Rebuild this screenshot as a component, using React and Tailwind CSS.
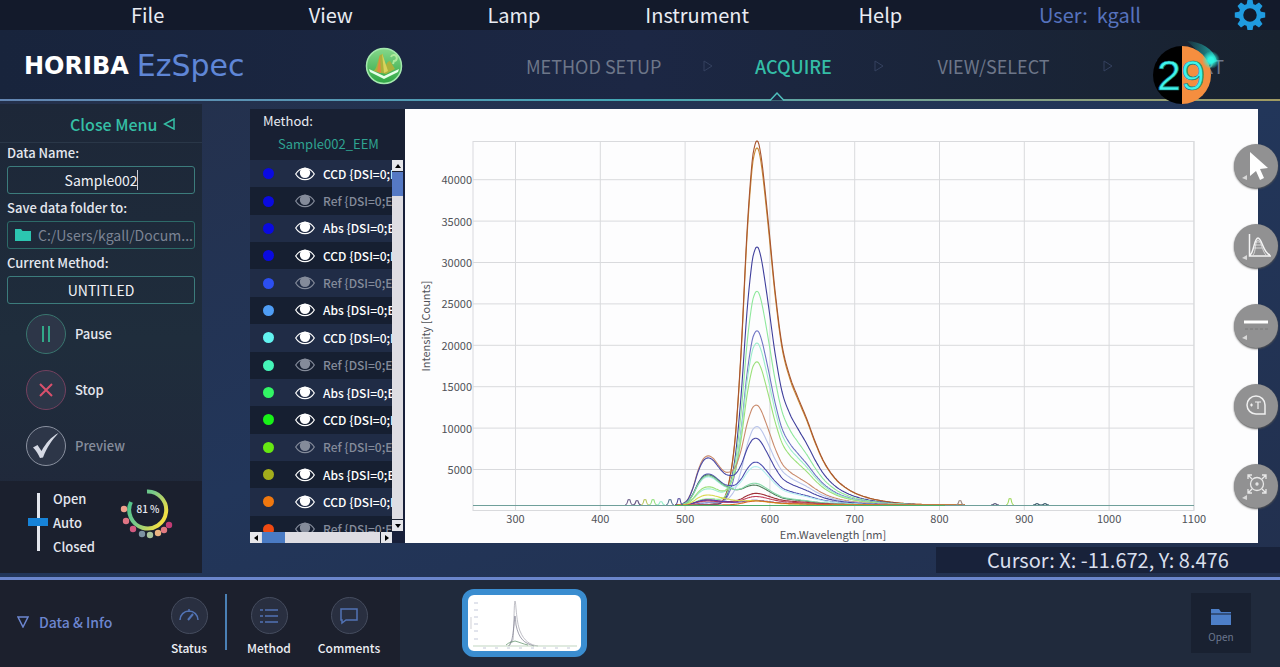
import { useState } from 'react';
import clsx from 'clsx';

const MENU_ITEMS = ['File', 'View', 'Lamp', 'Instrument', 'Help'];

const SERIES = [
    { type: 'CCD', color: '#0a0ae0', visible: true },
    { type: 'Ref', color: '#0a0ae0', visible: false },
    { type: 'Abs', color: '#0a0ae0', visible: true },
    { type: 'CCD', color: '#0a0ae0', visible: true },
    { type: 'Ref', color: '#2c4ff0', visible: false },
    { type: 'Abs', color: '#4f9df5', visible: true },
    { type: 'CCD', color: '#62f3f0', visible: true },
    { type: 'Ref', color: '#45f5b8', visible: false },
    { type: 'Abs', color: '#32f565', visible: true },
    { type: 'CCD', color: '#18f218', visible: true },
    { type: 'Ref', color: '#66e812', visible: false },
    { type: 'Abs', color: '#a3ad1c', visible: true },
    { type: 'CCD', color: '#f0780f', visible: true },
    { type: 'Ref', color: '#f04a12', visible: false },
];

// [offset from peak, relative height]
const MAIN_PEAK = [
    [-60, 0], [-45, 0.002], [-35, 0.01], [-29, 0.05], [-22, 0.18], [-16, 0.42], [-10, 0.75], [-5, 0.94], [-2, 0.99], [0, 1],
    [2, 0.99], [5, 0.94], [9, 0.84], [13, 0.73], [18, 0.59], [25, 0.44], [33, 0.352], [41, 0.295], [50, 0.235], [58, 0.175], [66, 0.124],
    [74, 0.088], [83, 0.06], [98, 0.033], [120, 0.014], [153, 0.003], [200, 0],
];
const SIDE_PEAK = [
    [-30, 0], [-25, 0.03], [-20, 0.12], [-15, 0.36], [-10, 0.7], [-5, 0.93], [0, 1], [5, 0.95], [10, 0.82], [15, 0.68],
    [21, 0.55], [30, 0.36], [40, 0.2], [55, 0.08], [75, 0],
];

// [colour, main peak height, side peak height]
const CURVES = [
    ['#c98a35', 357, 0],
    ['#a8552f', 364, 0],
    ['#3f3f9c', 258, 0],
    ['#8fe89c', 213, 6],
    ['#6f74c4', 174, 2],
    ['#9ceecb', 160, 16],
    ['#9be07a', 141, 18],
    ['#c98a6c', 94, 49],
    ['#b9c4ea', 78, 4],
    ['#4747a5', 61, 47],
    ['#4c4fb0', 39, 31],
    ['#b4f0f0', 35, 28],
    ['#4f7f5c', 16, 30],
    ['#86d8a8', 18, 29],
    ['#a03038', 11, 5],
    ['#c0405a', 8, 4],
    ['#5a3bb0', 4, 5],
    ['#d8d84a', 3, 10],
    ['#d86a20', 4, 0],
];

const BUMPS = [
    [224, 5, '#6a5a86'], [232, 4, '#6a5a86'], [240, 5, '#b5c45a'], [248, 5, '#8fe07a'], [256, 3, '#9ceecb'], [265, 5, '#4f6f8c'],
    [274, 6, '#54489a'], [555, 4, '#a08c84'], [605, 6, '#9ed85a'], [590, 1, '#555577'], [632, 1, '#335566'], [640, 1, '#335566'],
];

const sample = (profile, x) => {
    if (x <= profile[0][0] || x >= profile[profile.length - 1][0]) return 0;
    const i = profile.findIndex(([px]) => px > x);
    const p = (n) => profile[Math.max(0, Math.min(profile.length - 1, n))];
    const [x1, y1] = p(i - 1);
    const [x2, y2] = p(i);
    const m1 = (y2 - p(i - 2)[1]) / (x2 - p(i - 2)[0]);
    const m2 = (p(i + 1)[1] - y1) / (p(i + 1)[0] - x1);
    const h = x2 - x1;
    const t = (x - x1) / h;
    return (
        (2 * t ** 3 - 3 * t ** 2 + 1) * y1 +
        (t ** 3 - 2 * t ** 2 + t) * h * m1 +
        (-2 * t ** 3 + 3 * t ** 2) * y2 +
        (t ** 3 - t ** 2) * h * m2
    );
};

const BASELINE = 396;

const curvePath = (main, side) => {
    const points = [];
    for (let x = 270; x <= 560; x += 1) {
        const y = BASELINE - main * sample(MAIN_PEAK, x - 352) - side * sample(SIDE_PEAK, x - 303);
        points.push(`${x},${y.toFixed(1)}`);
    }
    return `M${points.join('L')}`;
};

const Curves = () => (
    <g fill="none" strokeWidth="1.1">
        {CURVES.map(([color, main, side]) => (
            <path key={`${color}${main}`} d={curvePath(main, side)} stroke={color} />
        ))}
        {BUMPS.map(([x, h, color]) => (
            <path key={x} d={`M${x - 4} 396Q${x - 2} 396 ${x - 1} ${396 - h}Q${x} ${395 - h} ${x + 1} ${396 - h}Q${x + 2} 396 ${x + 4} 396`} stroke={color} />
        ))}
        <path d="M68 396.5H789" stroke="#6f9f9a" />
        <path d="M270 396.5H540" stroke="#4cae6c" />
    </g>
);

const X_TICKS = [300, 400, 500, 600, 700, 800, 900, 1000, 1100];
const Y_TICKS = [5000, 10000, 15000, 20000, 25000, 30000, 35000, 40000];

const Chart = () => (
    <svg viewBox="0 0 853 434" className="h-full w-full" role="img" aria-label="Emission spectra">
        <g stroke="#d9dadd">
            {X_TICKS.map((t, i) => (
                <line key={t} x1={110.5 + i * 84.8} x2={110.5 + i * 84.8} y1="32" y2="401" />
            ))}
            {Y_TICKS.map((t, i) => (
                <line key={t} x1="68" x2="789" y1={360.5 - i * 41.4} y2={360.5 - i * 41.4} />
            ))}
            <rect x="68" y="32.5" width="721" height="369" fill="none" />
        </g>
        <Curves />
        <g fill="#505258" fontSize="11">
            {X_TICKS.map((t, i) => (
                <text key={t} x={110.5 + i * 84.8} y="414" textAnchor="middle">{t}</text>
            ))}
            {Y_TICKS.map((t, i) => (
                <text key={t} x="67" y={365 - i * 41.4} textAnchor="end">{t}</text>
            ))}
            <text x="428" y="430" textAnchor="middle">Em.Wavelength [nm]</text>
            <text transform="translate(25 217) rotate(-90)" textAnchor="middle">Intensity [Counts]</text>
        </g>
    </svg>
);

const Eye = () => (
    <svg viewBox="0 0 20 14" className="h-[14px] w-5">
        <path d="M.7 7C3 3 6 1.300 10 1.300S17 3 19.300 7C17 11 14 12.700 10 12.700S3 11 .7 7Z" fill="none" stroke="currentColor" strokeWidth="1.200" />
        <circle cx="10" cy="5.800" r="5.200" fill="currentColor" />
    </svg>
);

const SeriesList = () => {
    const [series, setSeries] = useState(SERIES);

    const toggle = (index) =>
        setSeries(series.map((s, i) => (i === index ? { ...s, visible: !s.visible } : s)));

    return (
        <ul className="grid h-[383px] auto-rows-fr">
            {series.map(({ type, color, visible }, i) => (
                <li
                    key={i}
                    className={clsx(
                        'flex items-center whitespace-nowrap pl-[13px] text-xs font-medium',
                        i % 2 ? 'bg-[#161f31]' : 'bg-[#202c46]',
                        visible ? 'text-white' : 'text-[#848b9a]'
                    )}
                >
                    <span className="size-[11px] shrink-0 rounded-full" style={{ backgroundColor: color }} />
                    <button type="button" aria-label={`Toggle ${type}`} onClick={() => toggle(i)} className="ml-[21px] shrink-0">
                        <Eye />
                    </button>
                    <span className="ml-2">{type} {'{'}DSI=0;E</span>
                </li>
            ))}
        </ul>
    );
};

const ScrollButton = ({ label, children }) => (
    <button type="button" aria-label={label} className="flex size-[11px] shrink-0 items-center justify-center bg-[#e6e6ea] text-black">
        <svg viewBox="0 0 8 8" className="size-2 fill-current">{children}</svg>
    </button>
);

const MethodPanel = () => (
    <section className="flex w-[155px] shrink-0 flex-col bg-[#18203a]">
        <header className="h-[51px] shrink-0 bg-[#182033] pl-[13px]">
            <h2 className="text-[13px] leading-[23px] text-[#e8ebf2]">Method:</h2>
            <p className="pl-[15px] text-[13px] leading-6 text-[#2fa391]">Sample002_EEM</p>
        </header>
        <div className="flex min-h-0 flex-1">
            <div className="flex min-w-0 flex-1 flex-col">
                <div className="min-h-0 flex-1 overflow-hidden">
                    <SeriesList />
                </div>
                <div className="flex h-[11px] bg-[#dedde3]">
                    <ScrollButton label="Scroll left"><path d="M6 1v6L2 4z" /></ScrollButton>
                    <div className="ml-px w-[23px] bg-[#4a7bc4]" />
                    <div className="flex-1" />
                    <div className="w-px bg-[#1d2433]" />
                    <ScrollButton label="Scroll right"><path d="M2 1v6l4-3z" /></ScrollButton>
                </div>
            </div>
            <div className="mr-0.5 mb-3 flex w-[11px] flex-col bg-[#dedde3]">
                <ScrollButton label="Scroll up"><path d="M1 6h6L4 2z" /></ScrollButton>
                <div className="h-px bg-[#1d2433]" />
                <div className="h-6 bg-[#5579c4]" />
                <div className="flex-1" />
                <div className="h-px bg-[#1d2433]" />
                <ScrollButton label="Scroll down"><path d="M1 2h6L4 6z" /></ScrollButton>
            </div>
        </div>
    </section>
);

const MenuBar = () => (
    <nav className="flex h-[30px] items-center bg-[#131a2b] pl-14 text-xl leading-7 text-[#e9ecf3]">
        {MENU_ITEMS.map((item) => (
            <button key={item} type="button" className="flex-1 basis-0 text-center">{item}</button>
        ))}
        <span className="w-[236px] text-center whitespace-pre text-[#5672bd]">User:  kgall</span>
        <button type="button" aria-label="Settings" className="flex w-[72px] justify-center pl-3">
            <svg viewBox="0 0 32 32" className="size-8 shrink-0">
                <g fill="#1f9be0">
                    {[0, 45, 90, 135, 180, 225, 270, 315].map((a) => (
                        <path key={a} d="M12.500 6l1-5.200h5l1 5.200z" transform={`rotate(${a} 16 16)`} />
                    ))}
                </g>
                <circle cx="16" cy="16" r="9" fill="none" stroke="#1f9be0" strokeWidth="4.500" />
            </svg>
        </button>
    </nav>
);

const StepArrow = () => (
    <svg viewBox="0 0 10 12" className="h-3 w-[10px] shrink-0" fill="none" stroke="#34415f">
        <path d="M1 1v10l8-5z" />
    </svg>
);

const Countdown = () => (
    <div className="absolute top-[16px] right-[69px] size-[58px]">
        <svg viewBox="0 0 58 58" className="size-full overflow-visible">
            <defs>
                <radialGradient id="spark">
                    <stop offset="0.300" stopColor="#2ff5e0" />
                    <stop offset="1" stopColor="#2ff5e0" stopOpacity="0" />
                </radialGradient>
                <linearGradient id="trail">
                    <stop offset="0" stopColor="#1fa7a5" stopOpacity="0.100" />
                    <stop offset="1" stopColor="#25d5cb" stopOpacity="0.800" />
                </linearGradient>
            </defs>
            <path d="M34-5C48-4 60 2 64 15L54 20C50 10 44 4 34-5Z" fill="url(#trail)" />
            <path d="M29 0a29 29 0 0 0 0 58z" fill="#000" />
            <path d="M29 0a29 29 0 0 1 0 58z" fill="#f58e3f" />
            <circle cx="58" cy="14" r="9" fill="url(#spark)" />
            <text x="28" y="44" textAnchor="middle" fontSize="43" fill="#3ff5ec" stroke="#17767a" strokeWidth="0.700" className="font-['Liberation_Sans',sans-serif]">29</text>
        </svg>
    </div>
);

const Header = () => (
    <header className="relative z-10 flex h-[71px] items-center bg-linear-to-r from-[#18243c] via-[#1c2744] to-[#18222f] pt-px pl-6 text-lg text-[#6d7689]">
        <h1 className="flex w-[234px] items-center gap-2 whitespace-nowrap font-['DejaVu_Sans',sans-serif] leading-8">
            <span className="text-2xl font-bold text-white">HORIBA</span>
            <span className="text-3xl text-[#5f86d6]">EzSpec</span>
        </h1>
        <svg viewBox="0 0 38 38" className="ml-[107px] size-[38px] shrink-0">
            <defs>
                <linearGradient id="leaf" x2="0" y2="1">
                    <stop offset="0" stopColor="#86d88a" />
                    <stop offset="1" stopColor="#2ea544" />
                </linearGradient>
            </defs>
            <circle cx="19" cy="19" r="17.500" fill="url(#leaf)" stroke="#a4e8ae" strokeWidth="1.500" />
            <path d="M8 24c4-1 4-9 7-16l3-1 1 13c3-2 3-6 6-6l5 8-9 5z" fill="#a9b23c" />
            <path d="M15 8l-3 17 4 1z" fill="#e08a42" />
            <path d="M17 6l2 20 4-2z" fill="#d9d25c" />
            <path d="M26 10a3 3 0 1 1 3 4l-1 3" fill="none" stroke="#aeea9c" strokeWidth="2" />
            <path d="M4 22l15 7 15-7-1 3-14 7L5 25z" fill="#e6ffe9" />
        </svg>
        <nav className="flex flex-1 items-center justify-between pr-14 pl-[123px]">
            <button type="button">METHOD SETUP</button>
            <StepArrow />
            <button type="button" className="font-medium text-[#34bda6]">ACQUIRE</button>
            <StepArrow />
            <button type="button" className="px-3">VIEW/SELECT</button>
            <StepArrow />
            <button type="button">REPORT</button>
        </nav>
        <div className="absolute inset-x-0 bottom-0 h-0.5 bg-linear-to-r from-[#6385b2] via-[#42a7b4] to-[#a09a62]" />
        <svg viewBox="0 0 16 10" className="absolute bottom-0 left-[769px] h-[10px] w-4" fill="#1c2744" stroke="#4fc0bd" strokeWidth="1.500">
            <path d="M1 9.500L8 2l7 7.500" />
        </svg>
        <Countdown />
    </header>
);

const Field = ({ id, label, children }) => (
    <div className="flex flex-col gap-[3px]">
        <label htmlFor={id} className="text-[13px] leading-5 font-medium text-[#e4e7ee]">{label}</label>
        {children}
    </div>
);

const ActionButton = ({ label, className, textClassName, children }) => (
    <button type="button" className="flex items-center gap-[9px]">
        <span className={clsx('flex size-10 items-center justify-center rounded-full border bg-[#2d3648]', className)}>
            {children}
        </span>
        <span className={clsx('text-[13px] leading-5 font-medium', textClassName)}>{label}</span>
    </button>
);

const GAUGE_DOTS = [
    [4, 27, '#f0a08c'], [6, 39, '#e07484'], [13, 47, '#d25a80'], [22, 52, '#7d92a2'],
    [30, 53, '#a9c49c'], [38, 51, '#ecb583'], [44, 48, '#e27a80'], [49, 43, '#c23c74'],
];

const Gauge = () => (
    <svg viewBox="0 0 56 58" className="mt-px h-[58px] w-14" role="img" aria-label="81 %">
        <defs>
            <linearGradient id="gauge" x1="0" x2="1" y1="0" y2="0.600">
                <stop offset="0.100" stopColor="#4cc38a" />
                <stop offset="0.500" stopColor="#79c98a" />
                <stop offset="1" stopColor="#f0df45" />
            </linearGradient>
        </defs>
        <path d="M27 9.500a18.500 18.500 0 1 1-16 10.500" fill="none" stroke="url(#gauge)" strokeWidth="4" />
        {GAUGE_DOTS.map(([cx, cy, fill]) => (
            <circle key={cx} cx={cx} cy={cy} r="3.200" fill={fill} />
        ))}
        <text x="28" y="31" textAnchor="middle" fontSize="10" fill="#e8ebf2">81 %</text>
    </svg>
);

const Shutter = () => {
    const [position, setPosition] = useState(1);

    return (
        <div className="flex h-[92px] items-start bg-[#1b202e] pl-7 text-[13px] leading-6 font-medium text-[#e4e7ee]">
            <input
                type="range"
                min="0"
                max="2"
                value={position}
                aria-label="Shutter"
                onChange={(e) => setPosition(Number(e.target.value))}
                className="mt-3 h-[58px] w-5 appearance-none bg-[linear-gradient(#e4e7ee,#e4e7ee)] bg-[length:3px_100%] bg-center bg-no-repeat [writing-mode:vertical-lr] [&::-webkit-slider-thumb]:h-2 [&::-webkit-slider-thumb]:w-5 [&::-webkit-slider-thumb]:appearance-none [&::-webkit-slider-thumb]:bg-[#1783d8]"
            />
            <div className="mt-1.5 ml-[5px] w-[67px]">
                <p>Open</p>
                <p>Auto</p>
                <p>Closed</p>
            </div>
            <Gauge />
        </div>
    );
};

const Sidebar = () => (
    <aside className="mt-[3px] mb-1 flex w-[202px] shrink-0 flex-col bg-linear-to-b from-[#1d2738] via-[#1f2d3c] to-[#20263a]">
        <button type="button" className="flex h-[39px] items-center gap-1.5 border-b border-[#2a3748] pt-0.5 pl-[70px] text-base font-medium text-[#35bfa5]">
            Close Menu
            <svg viewBox="0 0 12 12" className="size-3" fill="none" stroke="currentColor" strokeWidth="1.500">
                <path d="M11 1v10L1.500 6z" />
            </svg>
        </button>
        <div className="flex flex-col gap-1 px-[7px] text-sm">
            <Field id="data-name" label="Data Name:">
                <div className="relative">
                    <input id="data-name" defaultValue="Sample002" className="h-7 w-full rounded-[3px] border border-[#3c7c7c] text-center text-[#f0f2f6]" />
                    <span className="absolute top-1 left-[130px] h-5 w-px bg-[#c8ccd6]" />
                </div>
            </Field>
            <Field id="data-folder" label="Save data folder to:">
                <div className="flex h-7 items-center gap-1.5 rounded-[3px] border border-[#2d6a68] pl-1.5">
                    <svg viewBox="0 0 18 14" className="h-[14px] w-[18px] shrink-0 fill-[#2cc5b0]">
                        <path d="M1 1h6l1.500 2H17v10H1z" />
                    </svg>
                    <input id="data-folder" readOnly value="C:/Users/kgall/Docum..." className="min-w-0 flex-1 text-[#7c8494]" />
                </div>
            </Field>
            <Field id="current-method" label="Current Method:">
                <input id="current-method" readOnly value="UNTITLED" className="h-7 w-full rounded-[3px] border border-[#3c7c7c] text-center text-[#f0f2f6]" />
            </Field>
        </div>
        <div className="flex flex-1 flex-col gap-4 pt-[10px] pl-[26px]">
            <ActionButton label="Pause" className="border-[#39766f]" textClassName="text-[#e4e7ee]">
                <svg viewBox="0 0 12 16" className="h-4 w-3" stroke="#32a888" strokeWidth="2">
                    <path d="M3 0v16M9 0v16" />
                </svg>
            </ActionButton>
            <ActionButton label="Stop" className="border-[#74415f]" textClassName="text-[#e4e7ee]">
                <svg viewBox="0 0 14 14" className="size-[14px]" stroke="#d9506c" strokeWidth="2">
                    <path d="M1 1l12 12M13 1L1 13" />
                </svg>
            </ActionButton>
            <ActionButton label="Preview" className="border-[#8a91a0]" textClassName="text-[#868d9c]">
                <svg viewBox="0 0 28 28" className="size-7 fill-[#d5d9e4]">
                    <path d="M1 15.500l4.500-2.500 4 6C14 11 19 5 26.500 1 20 8 15 15 11 25.500L8 26C6 22 4 18 1 15.500z" />
                </svg>
            </ActionButton>
        </div>
        <Shutter />
    </aside>
);

const TOOLS = [
    {
        name: 'Select',
        icon: <path d="M16 8v24l6-5 4 9 4-2-4-9 8-1z" fill="#fff" />,
    },
    {
        name: 'Peaks',
        icon: (
            <g fill="none" stroke="#f4f4f4" strokeWidth="1.500">
                <path d="M15.500 10v22H37M16 31c4-2 4-17 8-17s5 15 12 17" />
                <path d="M19 31c3-3 2-15 5-15s4 11 8 15M21 18h5M21 21h6M20 24h8" strokeWidth="1" opacity="0.700" />
            </g>
        ),
    },
    {
        name: 'Line style',
        icon: (
            <g>
                <path d="M10 18h24" stroke="#fff" strokeWidth="3" />
                <path d="M11 25h23" stroke="#7a7a7a" strokeDasharray="3 2" />
            </g>
        ),
    },
    {
        name: 'Annotate',
        noArrow: true,
        icon: (
            <g fill="none" stroke="#f0f0f0" strokeWidth="1.500">
                <path d="M31 30V21a9 9 0 1 0-9 9z" />
                <path d="M21 18h6M24 18v7M16 21h3M17.500 19.500v3" strokeWidth="1.200" />
            </g>
        ),
    },
    {
        name: 'Zoom',
        icon: (
            <g fill="none" stroke="#e8e8e8" strokeWidth="1.300">
                <circle cx="23" cy="20" r="6.500" />
                <circle cx="23" cy="20" r="1" />
                <path d="M14 15v-4h4M28 11h4v4M14 25v4h4M28 29h4v-4M14 11l4 4M32 11l-4 4M14 29l4-4M32 29l-4-4" />
            </g>
        ),
    },
];

const Toolbox = () => (
    <div className="absolute top-[43px] right-0.5 flex flex-col gap-9">
        {TOOLS.map(({ name, icon, noArrow }) => (
            <button key={name} type="button" aria-label={name} className="size-11 rounded-full bg-[#919192] shadow-[0_1px_2px_#555]">
                <svg viewBox="0 0 44 44" className="size-full">
                    {!noArrow && <path d="M8 34l5-3v5z" fill="#d8d8d8" />}
                    {icon}
                </svg>
            </button>
        ))}
    </div>
);

const FooterButton = ({ label, children }) => (
    <button type="button" className="flex w-20 flex-col items-center gap-1 pt-3 text-xs font-medium text-[#eceef4]">
        <span className="flex size-[37px] items-center justify-center rounded-full border border-[#454c5e] bg-[#292f40]">
            <svg viewBox="0 0 20 18" className="h-[18px] w-5" fill="none" stroke="#5273b4" strokeWidth="1.500">{children}</svg>
        </span>
        <span className="leading-5">{label}</span>
    </button>
);

const Footer = () => (
    <footer className="flex h-[90px] items-stretch border-t-[3px] border-[#6b86cc] bg-[#202a3c]">
        <div className="flex w-[400px] shrink-0 items-center bg-[#1c202d] pb-1">
            <button type="button" className="flex w-[149px] items-center gap-[10px] pl-[17px] text-sm font-medium text-[#6c86d0]">
                <svg viewBox="0 0 12 12" className="size-3" fill="none" stroke="currentColor" strokeWidth="1.500">
                    <path d="M1 1h10L6 11z" />
                </svg>
                Data &amp; Info
            </button>
            <FooterButton label="Status">
                <path d="M1 13a9 9 0 0 1 18 0M10 2v3" />
                <path d="M9 13l5-6" strokeWidth="2" />
            </FooterButton>
            <div className="mr-0.5 -ml-1 h-14 w-0.5 bg-[#4a80b5]" />
            <FooterButton label="Method">
                <path d="M6 3h13M6 9h13M6 15h13M1 3h3M1 9h3M1 15h3" />
            </FooterButton>
            <FooterButton label="Comments">
                <path d="M2 2h16v11H7l-4 3v-3H2z" />
            </FooterButton>
        </div>
        <div className="flex flex-1 items-center justify-between pr-[29px] pb-0.5 pl-[62px]">
            <button type="button" aria-label="Sample002_EEM" className="h-[68px] w-[125px] rounded-xl border-[6px] border-[#3a8dd0] bg-white">
                <svg viewBox="0 0 113 56" className="size-full">
                    <g fill="none" strokeWidth="0.700">
                        <path d="M40 51C43 50 42 46 43 46S44 48 45 45C46 35 46 6 47 6S48 26 52 36C56 46 62 50 70 51" stroke="#a4a4ae" />
                        <path d="M41 51C43 48 44 48 46 30C47 18 47 18 48 30C51 44 56 48 66 51" stroke="#777789" />
                        <path d="M5 51h104" stroke="#a8c4a8" />
                        <path d="M38 50c3-3 7-3 9-4 4 1 8 3 13 4" stroke="#558a60" />
                        <path d="M3 22v12" stroke="#bbbbc4" />
                        <path d="M6 8h4M6 15h4M6 22h4M6 29h4M6 36h4M6 44h4M15 53h3M27 53h3M39 53h3M51 53h3M63 53h3M75 53h3M87 53h3M99 53h3" stroke="#c4c9da" strokeWidth="1" />
                    </g>
                </svg>
            </button>
            <button type="button" className="flex size-[60px] flex-col items-center justify-center gap-1 bg-[#192131] text-[10px] text-[#6c7890]">
                <svg viewBox="0 0 22 20" className="mt-1 h-5 w-[22px]">
                    <path d="M1 2h8l2 3h10v13H1z" fill="#4d7fc8" />
                    <path d="M1 7h20" stroke="#192131" />
                </svg>
                <span className="leading-3">Open</span>
            </button>
        </div>
    </footer>
);

const App = () => (
    <div className="flex min-h-screen flex-col bg-[#22314e] font-['Noto_Sans_CJK_SC',sans-serif]">
        <MenuBar />
        <Header />
        <main className="relative flex flex-1 bg-linear-to-br from-[#24304b] via-[#22365a] to-[#22304e]">
            <Sidebar />
            <div className="ml-12 flex min-w-0 flex-1 flex-col justify-between pt-2 pb-1">
                <div className="mr-[22px] flex h-[434px]">
                    <MethodPanel />
                    <div className="min-w-0 flex-1 bg-[#fdfdfe]">
                        <Chart />
                    </div>
                </div>
                <output className="h-[26px] w-[344px] self-end bg-[#18223a] pl-[51px] text-xl leading-[26px] text-[#d9dfec]">
                    Cursor: X: -11.672, Y: 8.476
                </output>
            </div>
            <Toolbox />
        </main>
        <Footer />
    </div>
);

export default App;
